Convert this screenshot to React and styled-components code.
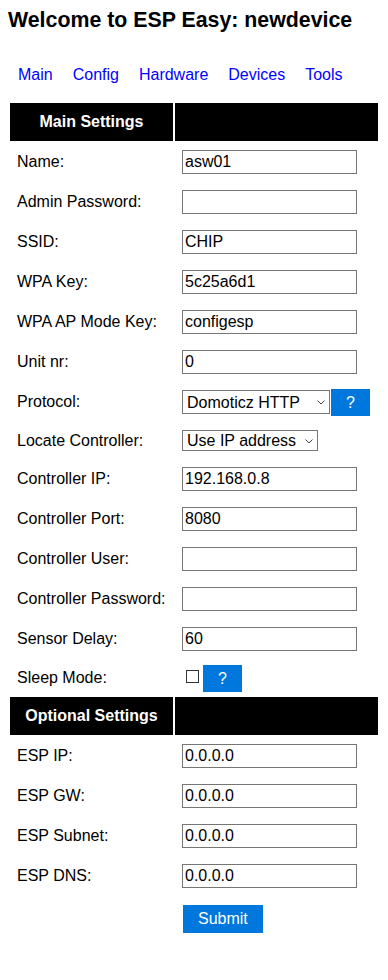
import React from 'react';
import styled, { createGlobalStyle } from 'styled-components';

const GlobalStyle = createGlobalStyle`
    body {
        margin: 8px;
        background: #ffffff;
    }
    * {
        font-family: "Liberation Sans", Arial, sans-serif;
        font-size: 16px;
    }
`

const Title = styled.h1`
    margin: 0;
    font-size: 21.33px;
    font-weight: bold;
    color: black;
    line-height: normal;
`

const Menu = styled.div`
    margin-top: 32.8px;
    line-height: normal;
    white-space: nowrap;
`

const MenuLink = styled.a`
    margin: 10px;
    color: blue;
    background-color: #ffffff;
    text-decoration: none;
    cursor: pointer;
`

const SettingsTable = styled.table`
    margin-top: 17.3px;
    width: 100%;
    border-collapse: separate;
    border-spacing: 2px;
    color: black;
`

const HeadCell = styled.th`
    padding: 10px;
    background-color: black;
    color: #ffffff;
    font-weight: bold;
    text-align: center;
    width: ${props => props.$first ? '143px' : 'auto'};
`

const Cell = styled.td`
    padding: 7px;
    text-align: left;
    white-space: nowrap;
    width: ${props => props.$label ? '149px' : 'auto'};
`

const TextInput = styled.input`
    box-sizing: border-box;
    width: 175px;
    height: 24px;
    margin: 0;
    padding: 1px 2px;
    border: 1px solid #767676;
    border-radius: 0;
    background: #ffffff;
    color: black;
    outline: none;
`

const SelectBox = styled.span`
    position: relative;
    display: inline-block;
`

const Select = styled.select`
    box-sizing: border-box;
    appearance: none;
    width: ${props => props.$w}px;
    height: ${props => props.$h}px;
    margin: 0;
    padding: 0 18px 0 4px;
    border: 1px solid #767676;
    border-radius: 0;
    background: #ffffff;
    color: black;
    outline: none;
`

const Chevron = styled.svg`
    position: absolute;
    right: 5px;
    top: 50%;
    margin-top: -2px;
    pointer-events: none;
`

const HelpLink = styled.a`
    padding: 5px 15px;
    background-color: #0077dd;
    color: #ffffff;
    border: solid 1px #ffffff;
    text-decoration: none;
    cursor: pointer;
`

const CheckBox = styled.input`
    appearance: none;
    box-sizing: border-box;
    width: 13px;
    height: 13px;
    margin: 3px 3px 3px 4px;
    border: 1px solid #333333;
    border-radius: 0;
    background: #ffffff;
    vertical-align: -2px;
`

const SubmitButton = styled.button`
    padding: 5px 15px;
    background-color: #0077dd;
    color: #ffffff;
    border: solid 1px #ffffff;
    border-radius: 0;
    line-height: normal;
    cursor: pointer;
`

const menu = ['Main', 'Config', 'Hardware', 'Devices', 'Tools']

const mainFields = [
    { label: 'Name:', value: 'asw01' },
    { label: 'Admin Password:', value: '' },
    { label: 'SSID:', value: 'CHIP' },
    { label: 'WPA Key:', value: '5c25a6d1' },
    { label: 'WPA AP Mode Key:', value: 'configesp' },
    { label: 'Unit nr:', value: '0' },
    { label: 'Protocol:', select: 'Domoticz HTTP', w: 148, h: 24, help: true },
    { label: 'Locate Controller:', select: 'Use IP address', w: 136, h: 21 },
    { label: 'Controller IP:', value: '192.168.0.8' },
    { label: 'Controller Port:', value: '8080' },
    { label: 'Controller User:', value: '' },
    { label: 'Controller Password:', value: '' },
    { label: 'Sensor Delay:', value: '60' },
    { label: 'Sleep Mode:', check: true, help: true },
]

const optionalFields = [
    { label: 'ESP IP:', value: '0.0.0.0' },
    { label: 'ESP GW:', value: '0.0.0.0' },
    { label: 'ESP Subnet:', value: '0.0.0.0' },
    { label: 'ESP DNS:', value: '0.0.0.0' },
]

const Field = ({ item }) => {
    if (item.select) {
        return (
            <SelectBox>
                <Select $w={item.w} $h={item.h} defaultValue={item.select}>
                    <option>{item.select}</option>
                </Select>
                <Chevron width="8" height="5" viewBox="0 0 8 5">
                    <path d="M0.5 0.5 L4 4 L7.5 0.5" fill="none" stroke="#444" strokeWidth="1" />
                </Chevron>
            </SelectBox>
        )
    }
    if (item.check) {
        return <CheckBox type="checkbox" />
    }
    return <TextInput type="text" defaultValue={item.value} />
}

const Section = ({ title, fields }) => (
    <>
        <tr>
            <HeadCell $first>{title}</HeadCell>
            <HeadCell></HeadCell>
        </tr>
        {fields.map((item, index) => (
            <tr key={index}>
                <Cell $label>{item.label}</Cell>
                <Cell>
                    <Field item={item} />{item.help && <HelpLink>?</HelpLink>}
                </Cell>
            </tr>
        ))}
    </>
)

const App = () => {
    return (
        <>
            <GlobalStyle />
            <Title>Welcome to ESP Easy: newdevice</Title>
            <Menu>
                {menu.map((title, index) => (
                    <MenuLink key={index}>{title}</MenuLink>
                ))}
            </Menu>
            <SettingsTable>
                <tbody>
                    <Section title="Main Settings" fields={mainFields} />
                    <Section title="Optional Settings" fields={optionalFields} />
                    <tr>
                        <Cell $label></Cell>
                        <Cell>
                            <SubmitButton type="button">Submit</SubmitButton>
                        </Cell>
                    </tr>
                </tbody>
            </SettingsTable>
        </>
    );
}

export default App;
